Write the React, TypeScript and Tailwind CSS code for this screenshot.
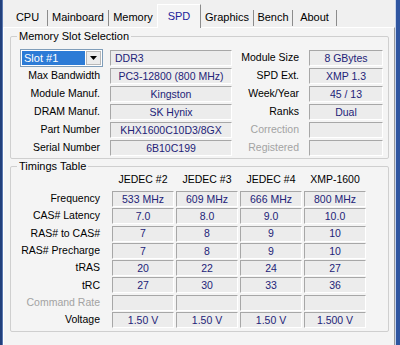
import React from "react";

const font = { fontFamily: '"Liberation Sans", Arial, sans-serif' };

const tabs = [
  { name: "CPU", w: "w-[40px]" },
  { name: "Mainboard", w: "w-[61px]" },
  { name: "Memory", w: "w-[48px]", noSep: true },
  { name: "SPD", w: "w-[44px]", active: true },
  { name: "Graphics", w: "w-[53px]" },
  { name: "Bench", w: "w-[39px]" },
  { name: "About", w: "w-[44px]" },
];

function Field({ value, className = "" }: { value?: string; className?: string }) {
  return (
    <div
      className={
        "h-[16px] flex items-center justify-center border-t border-l border-t-[#a7a7a7] border-l-[#a7a7a7] border-b border-r border-b-white border-r-white bg-[#ececec] text-[#232378] leading-none whitespace-nowrap overflow-hidden " +
        className
      }
    >
      {value}
    </div>
  );
}

function Label({ text, disabled }: { text: string; disabled?: boolean }) {
  return (
    <div
      className={
        "flex items-center justify-end pr-[10px] whitespace-nowrap " +
        (disabled ? "text-[#a3a3a3]" : "text-black")
      }
    >
      {text}
    </div>
  );
}

const slotRows = [
  ["Max Bandwidth", "PC3-12800 (800 MHz)", "SPD Ext.", "XMP 1.3"],
  ["Module Manuf.", "Kingston", "Week/Year", "45 / 13"],
  ["DRAM Manuf.", "SK Hynix", "Ranks", "Dual"],
  ["Part Number", "KHX1600C10D3/8GX", "Correction", ""],
  ["Serial Number", "6B10C199", "Registered", ""],
];

const timings: { label: string; vals: string[]; disabled?: boolean }[] = [
  { label: "Frequency", vals: ["533 MHz", "609 MHz", "666 MHz", "800 MHz"] },
  { label: "CAS# Latency", vals: ["7.0", "8.0", "9.0", "10.0"] },
  { label: "RAS# to CAS#", vals: ["7", "8", "9", "10"] },
  { label: "RAS# Precharge", vals: ["7", "8", "9", "10"] },
  { label: "tRAS", vals: ["20", "22", "24", "27"] },
  { label: "tRC", vals: ["27", "30", "33", "36"] },
  { label: "Command Rate", vals: ["", "", "", ""], disabled: true },
  { label: "Voltage", vals: ["1.50 V", "1.50 V", "1.50 V", "1.500 V"] },
];

export default function App() {
  return (
    <div
      className="w-[400px] h-[345px] flex bg-[#f0f0f0] overflow-hidden text-[10.5px] text-black"
      style={font}
    >
      <div className="w-[3px] bg-[#22407c] border-r border-r-[#5a78b0]" />
      <div className="flex-1 flex flex-col min-w-0">
        {/* tab strip */}
        <div className="h-[27px] flex items-end pl-[5px] relative z-10 text-[11px]">
          {tabs.map((t) =>
            t.active ? (
              <div
                key={t.name}
                className={
                  t.w +
                  " h-[24px] -mb-[1px] flex items-center justify-center bg-[#f4f4f4] border-l border-t border-white border-r border-r-[#8c8c8c] text-[#22229a] pb-[1px]"
                }
              >
                {t.name}
              </div>
            ) : (
              <div key={t.name} className={t.w + " h-[17px] mb-[1px] flex items-center"}>
                <div className="flex-1 text-center">{t.name}</div>
                {!t.noSep && <div className="w-[1px] h-[16px] bg-[#8c8c8c]" />}
              </div>
            )
          )}
        </div>
        {/* panel */}
        <div className="flex-1 bg-[#f4f4f4] border-l border-t border-white border-r border-r-[#9a9a9a] pl-[6px] pr-[5px] pt-[2px]">
          <fieldset className="border border-[#cfcfcf] rounded-[2px] pb-[1px]">
            <legend className="ml-[6px] px-[2px] leading-[13px] text-[11px]">Memory Slot Selection</legend>
            <div className="grid grid-cols-[99px_122px_77px_74px] auto-rows-[18px] pt-[6px]">
              <div className="flex items-center pl-[9px]">
                <div className="w-[83px] h-[18px] flex border border-[#7f9db9] bg-white">
                  <div className="flex-1 m-[1px] bg-[#2c7bd6] text-white flex items-center pl-[2px] text-[11px]">
                    Slot #1
                  </div>
                  <div className="w-[15px] m-[1px] ml-0 bg-[#ececec] border border-[#b8b8b8] flex items-center justify-center">
                    <svg width="7" height="4" viewBox="0 0 7 4">
                      <path d="M0 0h7L3.5 4z" fill="#000" />
                    </svg>
                  </div>
                </div>
              </div>
              <div className="flex items-center">
                <Field value="DDR3" className="w-full !justify-start pl-[4px]" />
              </div>
              <Label text="Module Size" />
              <div className="flex items-center">
                <Field value="8 GBytes" className="w-full" />
              </div>
              {slotRows.map((r) => (
                <React.Fragment key={r[0]}>
                  <Label text={r[0]} />
                  <div className="flex items-center">
                    <Field value={r[1]} className="w-full" />
                  </div>
                  <Label text={r[2]} disabled={r[2] === "Correction" || r[2] === "Registered"} />
                  <div className="flex items-center">
                    <Field value={r[3]} className="w-full" />
                  </div>
                </React.Fragment>
              ))}
            </div>
          </fieldset>
          <fieldset className="mt-[1px] border border-[#cfcfcf] rounded-[2px] pb-[2px]">
            <legend className="ml-[6px] px-[2px] leading-[13px] text-[11px]">Timings Table</legend>
            <div className="grid grid-cols-[99px_62px_62px_62px_62px] gap-x-[2px] auto-rows-[17.3px]">
              <div className="h-[14px]" />
              {["JEDEC #2", "JEDEC #3", "JEDEC #4", "XMP-1600"].map((h) => (
                <div key={h} className="h-[14px] flex items-center justify-center whitespace-nowrap">
                  {h}
                </div>
              ))}
              {timings.map((t) => (
                <React.Fragment key={t.label}>
                  <Label text={t.label} disabled={t.disabled} />
                  {t.vals.map((v, i) => (
                    <div key={i} className="flex items-center">
                      <Field value={v} className="w-full" />
                    </div>
                  ))}
                </React.Fragment>
              ))}
            </div>
          </fieldset>
        </div>
      </div>
      <div className="w-[5px] bg-[#2f55a0] border-l border-l-[#c8d4ea]" />
    </div>
  );
}
